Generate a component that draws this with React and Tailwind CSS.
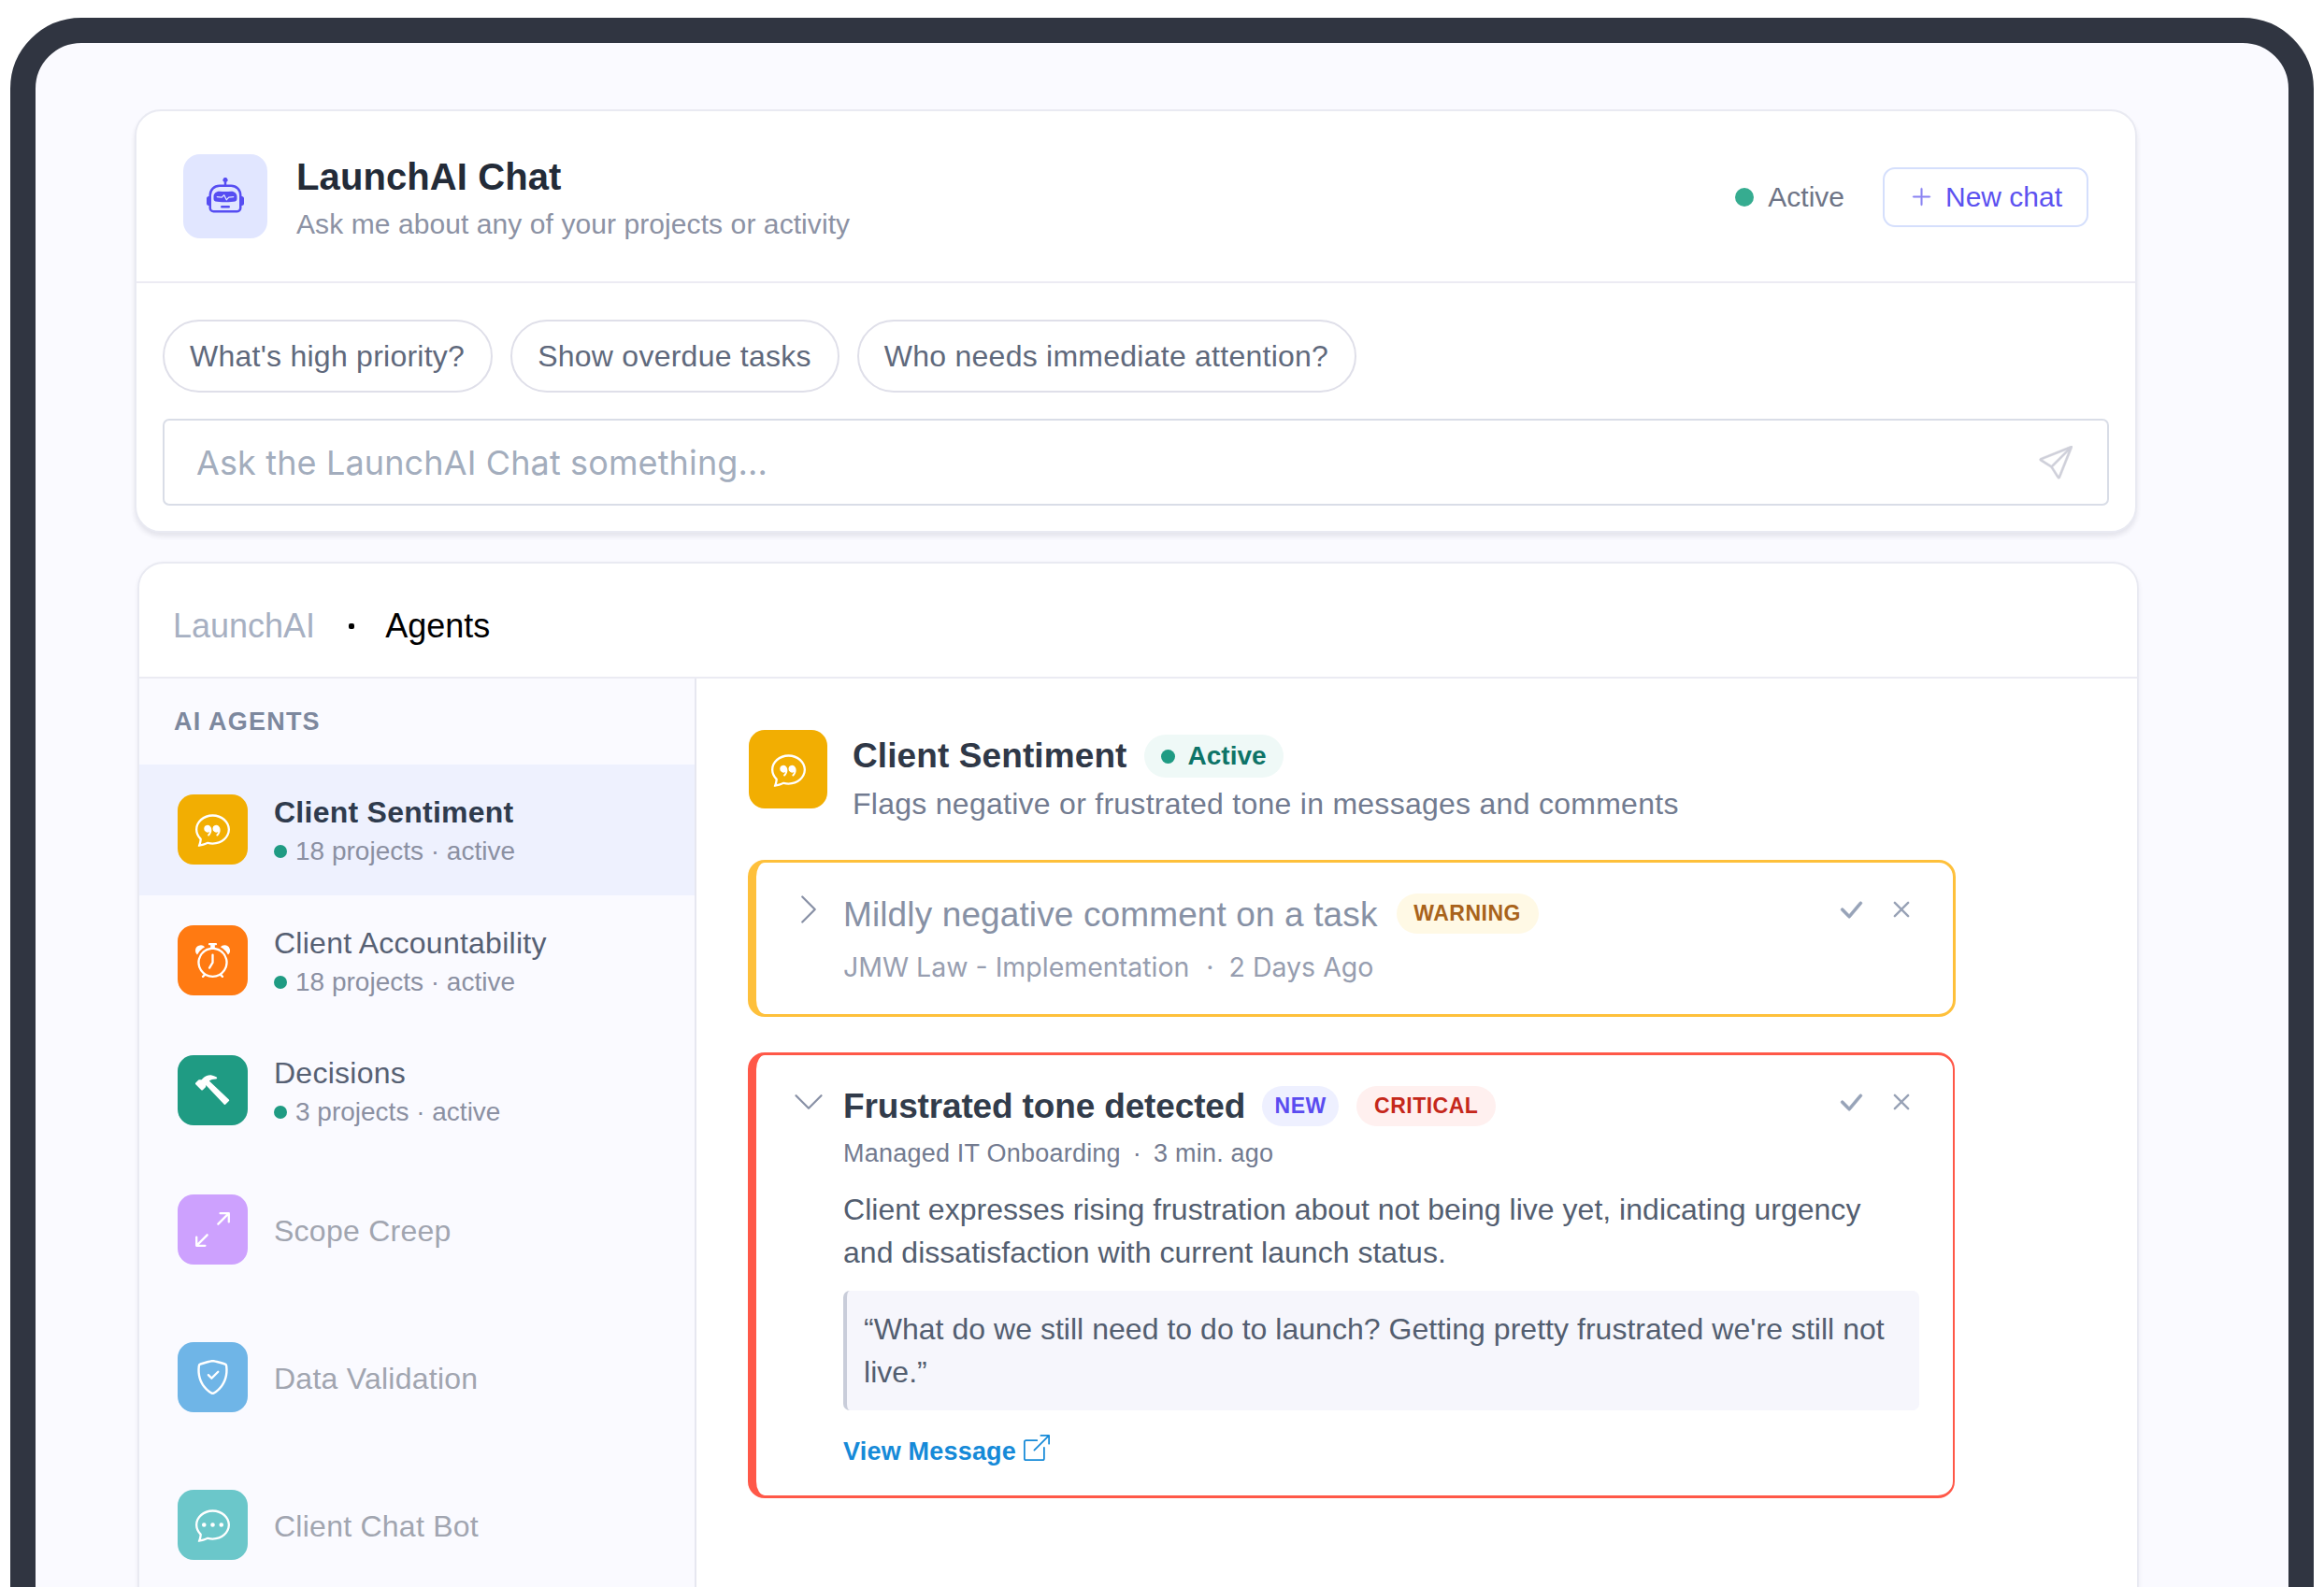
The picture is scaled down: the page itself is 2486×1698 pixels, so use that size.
import {
  BsAlarm,
  BsArrowsAngleExpand,
  BsBoxArrowUpRight,
  BsChatDots,
  BsChatQuote,
  BsCheckLg,
  BsChevronDown,
  BsChevronRight,
  BsHammer,
  BsPlusLg,
  BsRobot,
  BsSend,
  BsShieldCheck,
  BsX,
} from 'react-icons/bs';

const prompts = ["What's high priority?", 'Show overdue tasks', 'Who needs immediate attention?'];

const agents = [
  { name: 'Client Sentiment', projects: 18, icon: BsChatQuote, tile: 'bg-[#f2ae02]', selected: true },
  { name: 'Client Accountability', projects: 18, icon: BsAlarm, tile: 'bg-[#ff7a12]' },
  { name: 'Decisions', projects: 3, icon: BsHammer, tile: 'bg-[#1f9b83]' },
  { name: 'Scope Creep', icon: BsArrowsAngleExpand, tile: 'bg-[#cda1fe]' },
  { name: 'Data Validation', icon: BsShieldCheck, tile: 'bg-[#6fb5e7]' },
  { name: 'Client Chat Bot', icon: BsChatDots, tile: 'bg-[#6bc7ca]' },
];

function ChatCard() {
  return (
    <section className="w-[2142px] h-[453px] rounded-[28px] border-2 border-[#e9eaf2] bg-white shadow-[0_4px_5px_rgba(40,40,70,0.10)]">
      <header className="flex items-center h-[184px] px-[50px] border-b-2 border-[#ecebf3]">
        <div className="flex items-center justify-center size-[90px] rounded-[18px] bg-[#e1e6ff] text-[#564df2]">
          <BsRobot size={40} />
        </div>
        <div className="ml-[31px] pt-[5px]">
          <h1 className="text-[40px] leading-[48px] font-bold tracking-[0.1px] text-[#232b38]">LaunchAI Chat</h1>
          <p className="mt-[7px] text-[30px] leading-[40px] tracking-[0.08px] text-[#8c92a4]">
            Ask me about any of your projects or activity
          </p>
        </div>
        <div className="flex items-center ml-auto pt-px">
          <span className="size-5 rounded-full bg-[#36ac90]" />
          <span className="ml-[15px] mr-px text-[30px] text-[#6e7486]">Active</span>
          <button className="flex items-center ml-10 h-16 w-[220px] pl-[27px] rounded-[13px] border-2 border-[#d5dffc] text-[30px] text-[#5c52f0]">
            <BsPlusLg size={25} stroke="currentColor" strokeWidth={0.3} className="text-[#8b85f3]" />
            <span className="ml-[13px]">New chat</span>
          </button>
        </div>
      </header>

      <div className="px-7 pt-[39px]">
        <div className="flex gap-[19px]">
          {prompts.map((p) => (
            <button
              key={p}
              className="h-[78px] pl-[27px] pr-[28px] rounded-full border-2 border-[#dfdfe9] text-[32px] tracking-[0.25px] text-[#5f697c] whitespace-nowrap"
            >
              {p}
            </button>
          ))}
        </div>
        <div className="flex items-center justify-between mt-7 h-[93px] pl-[34px] pr-[37px] rounded-[7px] border-2 border-[#d9dde7]">
          <span className="font-['Inter',sans-serif] text-[36px] tracking-[0.13px] text-[#a3adbd]">
            Ask the LaunchAI Chat something...
          </span>
          <BsSend size={36} stroke="currentColor" strokeWidth={0.2} className="text-[#cfd0da]" />
        </div>
      </div>
    </section>
  );
}

function AgentRow({ agent }) {
  const Icon = agent.icon;
  const live = agent.projects != null;
  return (
    <li
      className={`flex items-center pl-[41px] ${live ? 'h-[139.5px]' : 'h-[158px]'} ${
        agent.selected ? 'bg-[#eef1fe]' : ''
      }`}
    >
      <div className={`flex items-center justify-center size-[75px] rounded-[17px] text-white ${agent.tile}`}>
        <Icon size={37} />
      </div>
      <div className="ml-[28px] pt-[3px]">
        <p
          className={`text-[32px] leading-[40px] tracking-[0.25px] ${
            agent.selected ? 'font-bold text-[#2f3b4d]' : live ? 'text-[#566073]' : 'text-[#a1a5b0]'
          }`}
        >
          {agent.name}
        </p>
        {live && (
          <p className="flex items-center mt-1 text-[28px] leading-[36px] text-[#8b90a2]">
            <span className="size-[14px] mr-[9px] rounded-full bg-[#1f9b83]" />
            {agent.projects} projects · active
          </p>
        )}
      </div>
    </li>
  );
}

function Actions() {
  return (
    <div className="flex items-center h-9 gap-[19px] ml-auto">
      <BsCheckLg size={33} stroke="currentColor" strokeWidth={0.3} className="text-[#97a3b8]" />
      <BsX size={38} className="text-[#98a2b6]" />
    </div>
  );
}

function Badge({ className, children }) {
  return (
    <span
      className={`flex items-center justify-center h-[43px] rounded-full text-[23px] font-bold tracking-[0.5px] ${className}`}
    >
      {children}
    </span>
  );
}

function AgentDetail() {
  return (
    <main className="flex-1 pl-[55px] pt-[55px]">
      <div className="flex items-start h-[99px] ml-px">
        <div className="flex items-center justify-center size-[84px] rounded-[17px] bg-[#f2ae02] text-white">
          <BsChatQuote size={37} />
        </div>
        <div className="ml-[27px] pt-[5px]">
          <div className="flex items-center h-[46px]">
            <h2 className="text-[37px] tracking-[0.1px] font-bold text-[#2f3847]">Client Sentiment</h2>
            <span className="flex items-center h-[46px] ml-[18px] px-[18px] rounded-full bg-[#eff9f7] text-[28px] font-bold text-[#0e7468]">
              <span className="size-[15px] mr-[14px] rounded-full bg-[#1f9b83]" />
              Active
            </span>
          </div>
          <p className="mt-2 text-[32px] leading-[40px] tracking-[0.27px] text-[#727b90]">
            Flags negative or frustrated tone in messages and comments
          </p>
        </div>
      </div>

      <article className="flex items-start w-[1292px] h-[168px] mt-10 pt-8 pl-[38px] pr-9 rounded-[18px] border-[3px] border-l-[9px] border-[#fec03b]">
        <BsChevronRight size={36} className="text-[#8991a6]" />
        <div className="ml-[19px] pt-px">
          <div className="flex items-center h-[46px]">
            <h3 className="text-[37px] tracking-[0.12px] text-[#8791a5]">Mildly negative comment on a task</h3>
            <Badge className="w-[152px] mb-[3px] ml-[20px] bg-[#fff9e5] text-[#a9631b]">WARNING</Badge>
          </div>
          <p className="flex mt-[15px] font-['Inter',sans-serif] text-[28.5px] leading-[36px] text-[#979eb0]">
            <span>JMW Law - Implementation</span>
            <span className="ml-[18px] mr-4">·</span>
            <span>2 Days Ago</span>
          </p>
        </div>
        <Actions />
      </article>

      <article className="flex items-start w-[1291px] h-[477px] mt-[38px] pt-8 pl-[38px] pr-9 rounded-[18px] border-y-[3px] border-r-2 border-l-[9px] border-[#ff5848]">
        <BsChevronDown size={36} className="text-[#8991a6]" />
        <div className="flex-1 ml-[19px]">
          <div className="flex items-start">
            <div className="flex items-center h-[46px]">
              <h3 className="text-[37px] tracking-[-0.15px] font-bold text-[#323c4b]">Frustrated tone detected</h3>
              <Badge className="w-[82px] mb-[2px] ml-[18px] bg-[#eef0ff] text-[#5a4cf0]">NEW</Badge>
              <Badge className="w-[149px] mb-[2px] ml-[19px] bg-[#fff0ef] text-[#c5281b]">CRITICAL</Badge>
            </div>
            <Actions />
          </div>
          <p className="flex mt-[10px] text-[27px] leading-[34px] tracking-[0.22px] text-[#737b90]">
            <span>Managed IT Onboarding</span>
            <span className="mx-[13px]">·</span>
            <span>3 min. ago</span>
          </p>
          <p className="mt-5 text-[32px] leading-[46px] tracking-[0.02px] text-[#535e70]">
            Client expresses rising frustration about not being live yet, indicating urgency
            <br />
            and dissatisfaction with current launch status.
          </p>
          <blockquote className="h-32 mt-[18px] pt-[18px] pl-[18px] rounded-[7px] border-l-4 border-[#c9cdda] bg-[#f6f6fc] text-[32px] leading-[46px] tracking-[0.03px] text-[#535e70]">
            “What do we still need to do to launch? Getting pretty frustrated we're still not
            <br />
            live.”
          </blockquote>
          <a className="flex mt-[26px] text-[27px] leading-[36px] tracking-[0.2px] font-bold text-[#168ad8]">
            View Message
            <BsBoxArrowUpRight size={28} className="ml-[8px]" />
          </a>
        </div>
      </article>
    </main>
  );
}

function AgentsCard() {
  return (
    <section className="w-[2141px] h-[1200px] mt-[31px] ml-[3px] rounded-[28px] border-2 border-[#e9eaf2] bg-white shadow-[0_2px_5px_rgba(40,40,70,0.06)]">
      <nav className="flex items-center h-[123px] pt-[13px] pl-[36px] border-b-2 border-[#ebebf3] text-[36px]">
        <span className="text-[#a7b0c2]">LaunchAI</span>
        <span className="size-[6px] ml-9 mr-[33px] rounded-[2px] bg-black" />
        <span className="text-black">Agents</span>
      </nav>
      <div className="flex h-[1073px]">
        <aside className="w-[596px] border-r-2 border-[#e6e7f0] bg-[#fafaff]">
          <h2 className="flex items-center h-[92px] pl-[37px] text-[27px] font-bold tracking-[1.2px] text-[#7d889e]">
            AI AGENTS
          </h2>
          <ul>
            {agents.map((a) => (
              <AgentRow key={a.name} agent={a} />
            ))}
          </ul>
        </aside>
        <AgentDetail />
      </div>
    </section>
  );
}

export default function App() {
  return (
    <div className="w-[2486px] h-[1698px] overflow-hidden bg-white font-['Liberation_Sans',Arial,sans-serif]">
      <div className="w-[2464px] h-[1900px] mt-[19px] ml-[11px] pt-[71px] pl-[106px] rounded-[76px] border-[27px] border-[#303541] bg-[#fafaff]">
        <ChatCard />
        <AgentsCard />
      </div>
    </div>
  );
}
